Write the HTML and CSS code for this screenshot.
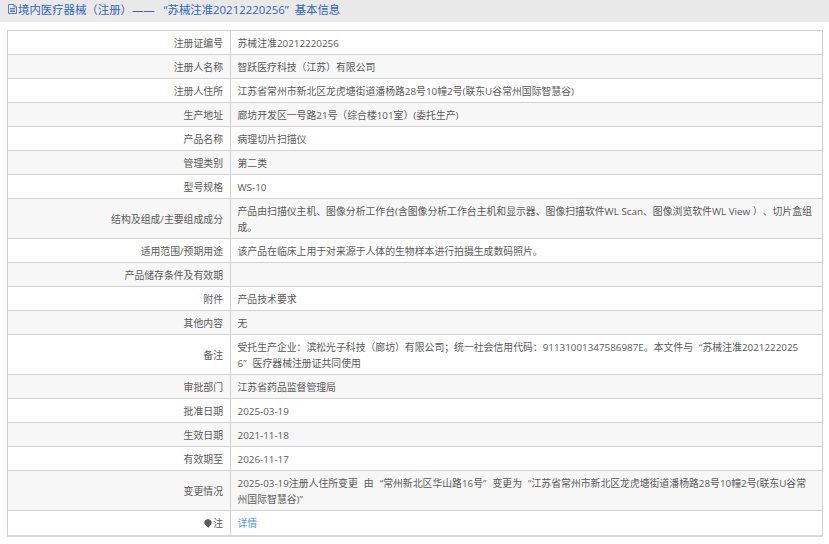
FILE: index.html
```html
<!DOCTYPE html>
<html lang="zh-CN">
<head>
  <meta charset="UTF-8">
  <meta name="viewport" content="width=device-width, initial-scale=1.0">
  <title>基本信息</title>
  <link rel="stylesheet" href="styles.css">
</head>
<body>
  <div class="page-title">
    <svg class="doc-icon" viewBox="0 0 9 10" width="9" height="10">
      <path d="M.5 .5h5.500l2.500 2.500v6.500h-8z M6 .5v2.500h2.500 M2 4.500h5 M2 6h5 M2 7.500h5" fill="none" stroke="#5b7fc4" stroke-width="1"/>
    </svg>
    <span>境内医疗器械（注册）—— &nbsp;&nbsp;“苏械注准20212220256” &nbsp;基本信息</span>
  </div>

  <table class="info-table">
    <tr><th>注册证编号</th><td>苏械注准20212220256</td></tr>
    <tr><th>注册人名称</th><td>智跃医疗科技（江苏）有限公司</td></tr>
    <tr><th>注册人住所</th><td>江苏省常州市新北区龙虎塘街道潘杨路28号10幢2号(联东U谷常州国际智慧谷)</td></tr>
    <tr><th>生产地址</th><td>廊坊开发区一号路21号（综合楼101室）(委托生产)</td></tr>
    <tr><th>产品名称</th><td>病理切片扫描仪</td></tr>
    <tr><th>管理类别</th><td>第二类</td></tr>
    <tr><th>型号规格</th><td>WS-10</td></tr>
    <tr><th>结构及组成/主要组成成分</th><td>产品由扫描仪主机、图像分析工作台(含图像分析工作台主机和显示器、图像扫描软件WL Scan、图像浏览软件WL View ）、切片盒组<br>成。</td></tr>
    <tr><th>适用范围/预期用途</th><td>该产品在临床上用于对来源于人体的生物样本进行拍摄生成数码照片。</td></tr>
    <tr><th>产品储存条件及有效期</th><td></td></tr>
    <tr><th>附件</th><td>产品技术要求</td></tr>
    <tr><th>其他内容</th><td>无</td></tr>
    <tr><th>备注</th><td class="wide-gap">受托生产企业：滨松光子科技（廊坊）有限公司；统一社会信用代码：91131001347586987E。本文件与 “苏械注准2021222025<br>6” 医疗器械注册证共同使用</td></tr>
    <tr><th>审批部门</th><td>江苏省药品监督管理局</td></tr>
    <tr><th>批准日期</th><td>2025-03-19</td></tr>
    <tr><th>生效日期</th><td>2021-11-18</td></tr>
    <tr><th>有效期至</th><td>2026-11-17</td></tr>
    <tr><th>变更情况</th><td class="wide-gap">2025-03-19注册人住所变更 由 “常州新北区华山路16号” 变更为 “江苏省常州市新北区龙虎塘街道潘杨路28号10幢2号(联东U谷常<br>州国际智慧谷)”</td></tr>
    <tr>
      <th>
        <svg class="note-icon" viewBox="0 0 8 9" width="8" height="9">
          <path d="M4 .2a3.700 3.700 0 0 1 3.700 3.700c0 1.900-2.200 2.800-3.500 5C3 6.800 .3 5.800 .3 3.900A3.700 3.700 0 0 1 4 .2z" fill="#5c5c5c"/>
        </svg>注
      </th>
      <td><a href="#">详情</a></td>
    </tr>
  </table>
</body>
</html>
```

FILE: styles.css
```css
body {
  margin: 0;
  background: #fff;
  color: #5a5a5a;
  font-family: "Open Sans", "Noto Sans CJK SC", sans-serif;
  font-size: 9.85px;
  text-spacing-trim: space-all;
}
.page-title {
  display: flex;
  align-items: center;
  gap: 1px;
  height: 17px;
  padding: 0 0 5px 8px;
  background: #e9e9e9;
  color: #3366bb;
  font-size: 11.4px;
}
.doc-icon {
  flex: none;
}
.info-table {
  box-sizing: border-box;
  width: 816px;
  margin: 8px 0 0 7px;
  border-collapse: collapse;
  table-layout: fixed;
  border-bottom: 2px solid #d8d8d8;
}
.info-table th,
.info-table td {
  padding: 3.5px 7px;
  border: 1px solid #d2d2d2;
  line-height: 16px;
  font-weight: normal;
  vertical-align: middle;
  white-space: nowrap;
}
.info-table th {
  width: 208px;
  text-align: right;
}
.info-table td {
  height: 16px;
  padding-right: 0;
  padding-left: 6.5px;
  text-align: left;
}
.info-table td.wide-gap {
  word-spacing: 3.5px;
}
.info-table tr:nth-child(even) {
  background: #f7f7f7;
}
.info-table tr:last-child th,
.info-table tr:last-child td {
  padding-bottom: 4.5px;
  border-bottom: 2px solid #d8d8d8;
}
.info-table a {
  color: #4a95f0;
  text-decoration: none;
}
.note-icon {
  vertical-align: -1px;
  margin-right: 1px;
}
```
